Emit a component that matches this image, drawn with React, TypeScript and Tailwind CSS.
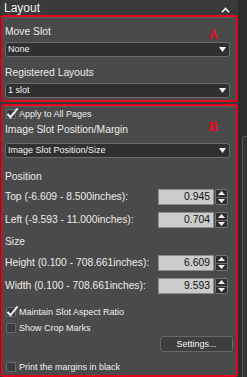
import type { ReactNode } from 'react'

const font = { fontFamily: '"Liberation Sans", Arial, sans-serif' }

const labelClass = 'h-[12px] text-[10.3px] leading-[12px] text-[#ececec]'

function Triangle() {
  return (
    <svg width="7" height="5" viewBox="0 0 7 5" className="shrink-0">
      <path d="M0 0h7L3.5 5z" fill="#f2f2f2" />
    </svg>
  )
}

function Select({ value, className }: { value: string; className?: string }) {
  return (
    <div
      className={`flex h-[15px] w-[225px] items-center justify-between rounded-[3px] border border-[#6b6b6b] bg-[#303030] pl-[2px] pr-[3px] ${className ?? ''}`}
    >
      <span className="text-[9px] leading-[11px] text-[#f4f4f4]">{value}</span>
      <Triangle />
    </div>
  )
}

function Checkbox({ label, checked, className }: { label: string; checked?: boolean; className?: string }) {
  return (
    <div className={`flex h-[12px] items-center gap-[3px] ${className ?? ''}`}>
      <span className="relative ml-[1px] h-[10px] w-[10px] shrink-0 rounded-[1px] border border-[#6c6c6c] bg-[#3b3b3b]">
        {checked ? (
          <svg width="13" height="12" viewBox="0 0 13 12" className="absolute left-[-1px] top-[-3px]">
            <path d="M1.5 7l3 3.2L11.5 1.5" fill="none" stroke="#f6f6f6" strokeWidth="1.9" />
          </svg>
        ) : null}
      </span>
      <span className="text-[9px] leading-[11px] text-[#f0f0f0]">{label}</span>
    </div>
  )
}

function Spinner() {
  return (
    <div className="ml-[1px] flex h-[16px] w-[13px] flex-col rounded-[2px] border border-[#747474] bg-[#2e2e2e]">
      <div className="flex flex-1 items-center justify-center border-b border-[#6a6a6a]">
        <svg width="7" height="4" viewBox="0 0 7 4">
          <path d="M0 4h7L3.5 0z" fill="#f0f0f0" />
        </svg>
      </div>
      <div className="flex flex-1 items-center justify-center">
        <svg width="7" height="4" viewBox="0 0 7 4">
          <path d="M0 0h7L3.5 4z" fill="#f0f0f0" />
        </svg>
      </div>
    </div>
  )
}

function NumberRow({ label, value, className }: { label: string; value: string; className?: string }) {
  return (
    <div className={`flex h-[16px] items-center pr-[8px] ${className ?? ''}`}>
      <span className={`flex-1 ${labelClass}`}>{label}</span>
      <div className="flex h-[16px] w-[56px] items-center justify-end border border-[#8c8c8c] bg-[#cbcbcb] pr-[3px] text-[10.4px] leading-[12px] text-[#111]">
        {value}
      </div>
      <Spinner />
    </div>
  )
}

function Annotated({ letter, className, children }: { letter: string; className?: string; children: ReactNode }) {
  return (
    <div className={`relative ml-[1px] rounded-[3px] border-2 border-[#e5041c] ${className ?? ''}`}>
      <div className="flex h-full flex-col rounded-[2px] border-t border-[#5e5e5e] bg-[#4a4a4a] pl-[2px]">
        {children}
      </div>
      <span
        className={`absolute right-[18px] text-[12.5px] font-bold leading-[13px] text-[#ee0a1e] ${letter === 'A' ? 'top-[12px]' : 'top-[15px]'}`}
        style={font}
      >
        {letter}
      </span>
    </div>
  )
}

export default function App() {
  return (
    <div className="flex h-[377px] w-[247px] overflow-hidden bg-[#3a3a3a]" style={font}>
      <div className="flex w-[238px] shrink-0 flex-col">
        <div className="flex h-[15px] items-center justify-between pl-[4px] pr-[8px]">
          <span className="text-[12px] leading-[14px] text-[#f2f2f2]">Layout</span>
          <svg width="9" height="6" viewBox="0 0 9 6" className="mt-[5px]">
            <path d="M1 5.2L4.5 1.5 8 5.2" fill="none" stroke="#f4f4f4" strokeWidth="1.6" />
          </svg>
        </div>

        <Annotated letter="A" className="h-[87px]">
          <span className={`mt-[8px] ${labelClass}`}>Move Slot</span>
          <Select value="None" className="mt-[4px]" />
          <span className={`mt-[10px] ${labelClass}`}>Registered Layouts</span>
          <Select value="1 slot" className="mt-[4px]" />
        </Annotated>

        <Annotated letter="B" className="mt-[2px] flex-1">
          <Checkbox label="Apply to All Pages" checked className="mt-[1px]" />
          <span className={`mt-[4px] ${labelClass}`}>Image Slot Position/Margin</span>
          <Select value="Image Slot Position/Size" className="mt-[7px]" />
          <span className={`mt-[13px] ${labelClass}`}>Position</span>
          <NumberRow label="Top (-6.609 - 8.500inches):" value="0.945" className="mt-[6px]" />
          <NumberRow label="Left (-9.593 - 11.000inches):" value="0.704" className="mt-[7px]" />
          <span className={`mt-[8px] ${labelClass}`}>Size</span>
          <NumberRow label="Height (0.100 - 708.661inches):" value="6.609" className="mt-[7px]" />
          <NumberRow label="Width (0.100 - 708.661inches):" value="9.593" className="mt-[7px]" />
          <Checkbox label="Maintain Slot Aspect Ratio" checked className="mt-[12px]" />
          <Checkbox label="Show Crop Marks" className="mt-[4px]" />
          <div className="mt-[2px] flex justify-end pr-[3px]">
            <div className="flex h-[16px] w-[73px] items-center justify-center rounded-[3px] border border-[#686868] bg-[#3e3e3e] text-[9px] leading-[11px] text-[#f4f4f4]">
              Settings...
            </div>
          </div>
          <Checkbox label="Print the margins in black" className="mt-[9px]" />
        </Annotated>
      </div>

      <div className="flex flex-1 flex-col bg-[#2c2c2c]">
        <div className="ml-[4px] mt-[136px] flex-1 rounded-tl-[3px] border-l border-t border-[#5a5a5a] bg-[#333333]" />
      </div>
    </div>
  )
}
